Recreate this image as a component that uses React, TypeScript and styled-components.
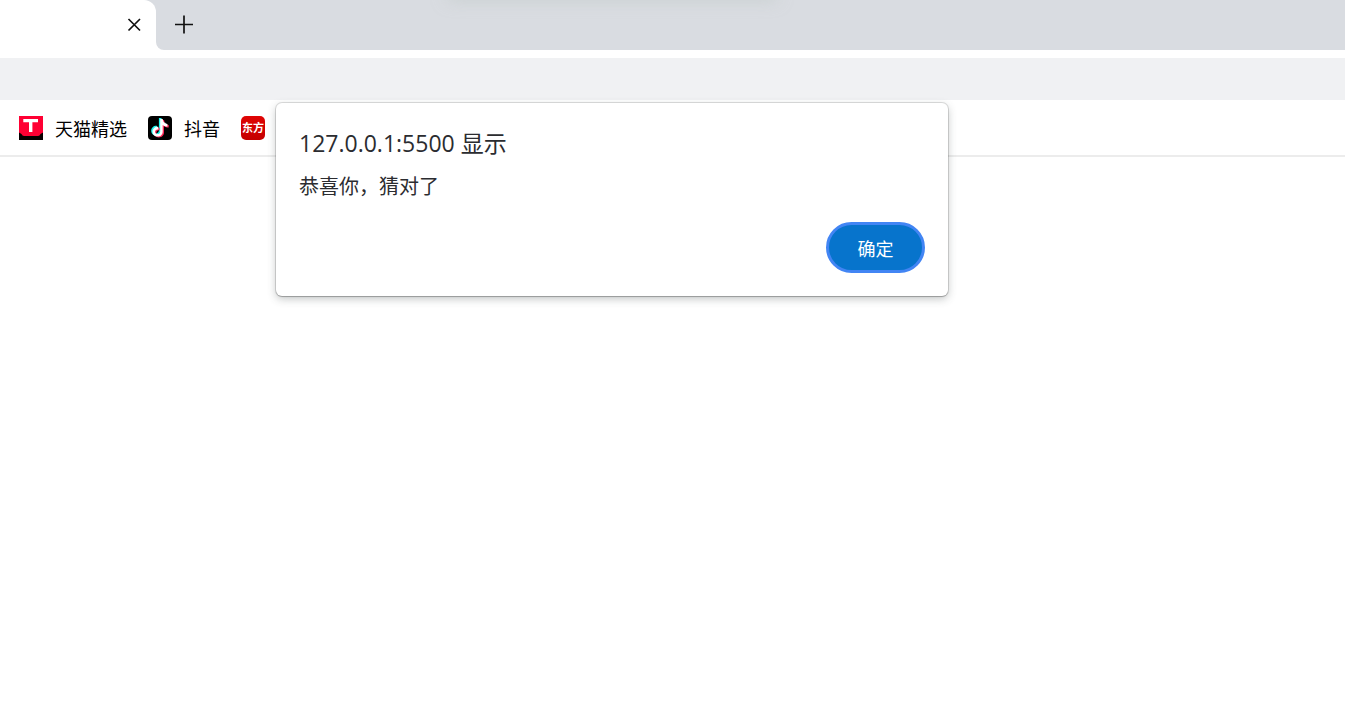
import React from 'react';
import styled, { createGlobalStyle } from 'styled-components';

const GlobalStyle = createGlobalStyle`
  *, *::before, *::after { box-sizing: border-box; }
  body {
    margin: 0;
    background: #fff;
    color: #000;
    font-family: "Open Sans", "Noto Sans CJK SC", sans-serif;
  }
  button { font-family: inherit; }
`;

const Browser = styled.div`
  position: relative;
  min-height: 100vh;
  overflow: hidden;
`;

const TabStrip = styled.header`
  display: flex;
  height: 50px;
`;

const TabSlot = styled.div`
  width: 156px;
  background: linear-gradient(#d9dce1 50%, #fff 50%);
`;

const Tab = styled.div`
  display: flex;
  align-items: center;
  justify-content: flex-end;
  height: 100%;
  padding-right: 12px;
  border-top-right-radius: 12px;
  background: #fff;
`;

const StripRest = styled.div`
  position: relative;
  flex: 1;
  display: flex;
  align-items: center;
  padding-left: 18px;
  background: #d9dce1;
  border-bottom-left-radius: 8px;

  &::before {
    content: "";
    position: absolute;
    top: -14px;
    left: 294px;
    width: 324px;
    height: 10px;
    box-shadow: 0 2px 16px 2px rgba(190, 200, 196, 0.6);
  }
`;

const IconButton = styled.button`
  display: flex;
  padding: 0;
  border: 0;
  background: none;
  color: #111;
`;

const AddressBar = styled.div`
  height: 50px;
  border-top: 8px solid #fff;
  background: #f0f1f3;
`;

const Bookmarks = styled.nav`
  display: flex;
  align-items: center;
  gap: 21px;
  height: 57px;
  padding-left: 19px;
  border-bottom: 2px solid #ececec;
`;

const Bookmark = styled.a`
  display: flex;
  align-items: center;
  gap: 12px;
  color: #000;
  font-size: 18px;
  line-height: 24px;
  text-decoration: none;
  white-space: nowrap;
`;

const BookmarkLabel = styled.span`
  padding-top: 2px;
`;

const Badge = styled.span`
  display: flex;
  align-items: center;
  justify-content: center;
  width: 24px;
  height: 24px;
  border-radius: 5px;
  background: linear-gradient(#e00404, #c40000);
  color: #fff;
  font-size: 11px;
  font-weight: 700;
  line-height: 24px;
`;

const Alert = styled.dialog`
  position: absolute;
  top: 103px;
  left: 276px;
  display: flex;
  flex-direction: column;
  width: 672px;
  max-width: calc(100vw - 300px);
  margin: 0;
  padding: 23px;
  border: 0;
  border-radius: 6px;
  background: #fff;
  color: #2b2c30;
  box-shadow: 0 0 0 1px rgba(0, 0, 0, 0.12), 0 1px 1px rgba(0, 0, 0, 0.18), 0 3px 8px rgba(60, 70, 70, 0.3);
`;

const Title = styled.h1`
  margin: 0;
  font-size: 23px;
  font-weight: 400;
  line-height: 34px;
`;

const Message = styled.p`
  margin: 12px 0 20px;
  font-size: 20px;
  line-height: 30px;
`;

const Confirm = styled.button`
  align-self: flex-end;
  width: 99px;
  height: 51px;
  padding: 2px 0 0;
  border: 3px solid #4285f4;
  border-radius: 26px;
  background: #0774cc;
  color: #fff;
  font-size: 18px;
  line-height: 24px;
  outline: none;
`;

const TmallIcon = () => (
  <svg width="24" height="24" viewBox="0 0 24 24" aria-hidden="true">
    <rect width="24" height="24" fill="#ff0033" />
    <path d="M0 16.5 L2.5 18 Q3.2 20 5 20 H19 Q20.8 20 21.5 18 L24 16.5 V24 H0Z" fill="#080000" />
    <path d="M4.3 3 H19 V6.2 H13.4 V16 H10 V6.2 H4.3Z" fill="#fff" />
  </svg>
);

const notePath =
  'M12 3 H14.5 C14.8 5.8 16.5 7.6 19.2 8 V10.6 C17.4 10.6 15.8 10 14.5 9 V15.4 C14.5 18.7 12.2 20.6 9.4 20.6 C6.4 20.6 4.3 18.4 4.3 15.7 C4.3 12.6 7 10.4 10.1 10.8 V13.5 C8.2 13 6.9 14.2 6.9 15.8 C6.9 17.2 8 18.1 9.3 18.1 C10.9 18.1 12 17 12 15.4Z';

const DouyinIcon = () => (
  <svg width="24" height="24" viewBox="0 0 24 24" aria-hidden="true">
    <rect width="24" height="24" rx="4" fill="#000" />
    <path d={notePath} transform="translate(-1.1 -0.9)" fill="#20f4ee" />
    <path d={notePath} transform="translate(1.5 0.9)" fill="#fe2858" />
    <path d={notePath} transform="translate(0.2 0)" fill="#fff" />
  </svg>
);

export default function App() {
  return (
    <Browser>
      <GlobalStyle />
      <TabStrip>
        <TabSlot>
          <Tab>
            <IconButton type="button" aria-label="关闭标签页">
              <svg width="20" height="20" viewBox="0 0 20 20">
                <path d="M4.5 4 L16 15.5 M16 4 L4.5 15.5" stroke="currentColor" strokeWidth="1.7" fill="none" />
              </svg>
            </IconButton>
          </Tab>
        </TabSlot>
        <StripRest>
          <IconButton type="button" aria-label="新建标签页">
            <svg width="20" height="20" viewBox="0 0 20 20">
              <path d="M1 9.5 H19 M10 0.5 V18.5" stroke="currentColor" strokeWidth="1.7" fill="none" />
            </svg>
          </IconButton>
        </StripRest>
      </TabStrip>
      <AddressBar />
      <Bookmarks>
        <Bookmark href="#tmall">
          <TmallIcon />
          <BookmarkLabel>天猫精选</BookmarkLabel>
        </Bookmark>
        <Bookmark href="#douyin">
          <DouyinIcon />
          <BookmarkLabel>抖音</BookmarkLabel>
        </Bookmark>
        <Bookmark href="#dongfang">
          <Badge>东方</Badge>
        </Bookmark>
      </Bookmarks>
      <Alert open aria-labelledby="alert-title">
        <Title id="alert-title">127.0.0.1:5500 显示</Title>
        <Message>恭喜你，猜对了</Message>
        <Confirm type="button">确定</Confirm>
      </Alert>
    </Browser>
  );
}
